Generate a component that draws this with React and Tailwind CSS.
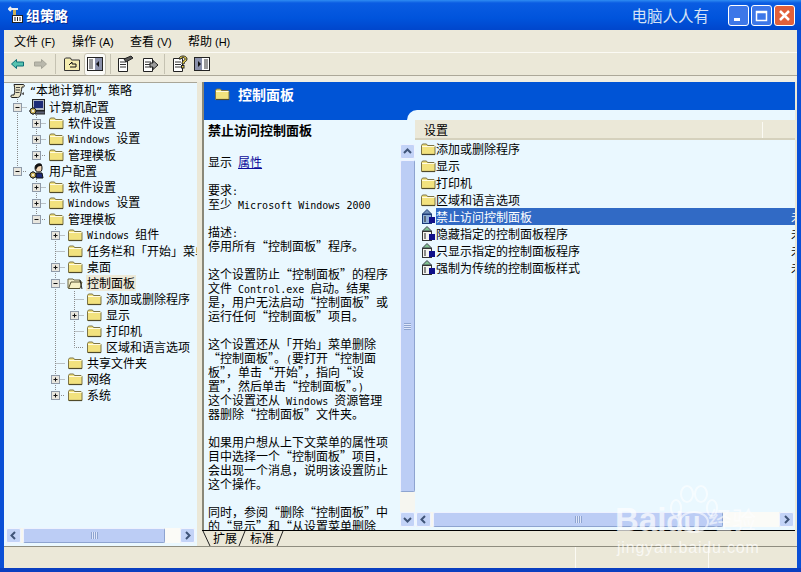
import React from 'react';

const treeRows = [
  { label: '', icon: 'root', cells: [] },
  { label: '计算机配置', icon: 'computer', cells: [['tee', 'minus']] },
  { label: '软件设置', cells: [['v'], ['tee', 'plus']] },
  { label: 'Windows 设置', cells: [['v'], ['tee', 'plus']] },
  { label: '管理模板', cells: [['v'], ['end', 'plus']] },
  { label: '用户配置', icon: 'user', cells: [['end', 'minus']] },
  { label: '软件设置', cells: [[], ['tee', 'plus']] },
  { label: 'Windows 设置', cells: [[], ['tee', 'plus']] },
  { label: '管理模板', cells: [[], ['end', 'minus']] },
  { label: 'Windows 组件', cells: [[], [], ['tee', 'plus']] },
  { label: '任务栏和「开始」菜单', cells: [[], [], ['tee']] },
  { label: '桌面', cells: [[], [], ['tee', 'plus']] },
  { label: '控制面板', icon: 'open', selected: true, cells: [[], [], ['tee', 'minus']] },
  { label: '添加或删除程序', cells: [[], [], ['v'], ['tee']] },
  { label: '显示', cells: [[], [], ['v'], ['tee', 'plus']] },
  { label: '打印机', cells: [[], [], ['v'], ['tee']] },
  { label: '区域和语言选项', cells: [[], [], ['v'], ['end']] },
  { label: '共享文件夹', cells: [[], [], ['tee']] },
  { label: '网络', cells: [[], [], ['tee', 'plus']] },
  { label: '系统', cells: [[], [], ['end', 'plus']] },
];

const descLines = [
  '显示 @属性',
  '',
  '要求:',
  '至少 Microsoft Windows 2000',
  '',
  '描述:',
  '停用所有“控制面板”程序。',
  '',
  '这个设置防止“控制面板”的程序',
  '文件 Control.exe 启动。结果',
  '是\uFF0C用户无法启动“控制面板”或',
  '运行任何“控制面板”项目。',
  '',
  '这个设置还从「开始」菜单删除',
  '“控制面板”。(要打开“控制面',
  '板”\uFF0C单击“开始”\uFF0C指向“设',
  '置”\uFF0C然后单击“控制面板”。)',
  '这个设置还从 Windows 资源管理',
  '器删除“控制面板”文件夹。',
  '',
  '如果用户想从上下文菜单的属性项',
  '目中选择一个“控制面板”项目\uFF0C',
  '会出现一个消息\uFF0C说明该设置防止',
  '这个操作。',
  '',
  '同时\uFF0C参阅“删除“控制面板”中',
  '的“显示”和“从设置菜单删除',
];

const listRows = [
  { label: '添加或删除程序', folder: true },
  { label: '显示', folder: true },
  { label: '打印机', folder: true },
  { label: '区域和语言选项', folder: true },
  { label: '禁止访问控制面板', selected: true },
  { label: '隐藏指定的控制面板程序' },
  { label: '只显示指定的控制面板程序' },
  { label: '强制为传统的控制面板样式' },
];

const mono = "font-['DejaVu_Sans_Mono'] text-[10px]";

// Latin runs use a narrow mono so they sit at 6px a character, like the bitmap font
function Txt({ children }) {
  const parts = children.split(/([\x20-\x7e]+)/);
  return (
    <span className="whitespace-pre">
      {parts.map((p, i) =>
        /^[\x20-\x7e]+$/.test(p) ? (
          <span key={i} className={mono}>{p}</span>
        ) : (
          p
        )
      )}
    </span>
  );
}

function Folder({ open }) {
  return (
    <svg width="16" height="16" viewBox="0 0 16 16" className="shrink-0">
      {open ? (
        <>
          <path d="M1 13V4h5l1 1h6v2" fill="#f3eecb" stroke="#6b6440" />
          <path d="M1.500 13.500L4 7h11l-2 6.500z" fill="#f6f0c4" stroke="#55502f" />
          <path d="M13 5l2 9" stroke="#222" />
        </>
      ) : (
        <>
          <path d="M1.500 13.500V4.500l1-1.500h4l1 1.500h6.500l1 1v8z" fill="#f2e27e" stroke="#7d7446" />
          <path d="M2 5.500h12.500" stroke="#fffbe0" />
          <path d="M2 13.500h13" stroke="#4f4a2a" strokeWidth="1.200" />
        </>
      )}
    </svg>
  );
}

function TreeCell({ kind, box }) {
  return (
    <svg width="19" height="16" viewBox="0 0 19 16" className="shrink-0">
      {kind === 'v' && <path d="M9.500 0v16" fill="none" stroke="#8b8b8b" strokeDasharray="1 1" />}
      {kind === 'tee' && <path d="M9.500 0v16M9.500 8.500H19" fill="none" stroke="#8b8b8b" strokeDasharray="1 1" />}
      {kind === 'end' && <path d="M9.500 0v8.500H19" fill="none" stroke="#8b8b8b" strokeDasharray="1 1" />}
      {box && (
        <>
          <rect x="5.500" y="4.500" width="8" height="8" fill="#e8e6de" stroke="#8f9aa8" />
          <path d="M7.500 8.500h4" stroke="#111" />
          {box === 'plus' && <path d="M9.500 6.500v4" stroke="#111" />}
        </>
      )}
    </svg>
  );
}

function RootIcon() {
  return (
    <svg width="16" height="16" viewBox="0 0 16 16" className="shrink-0">
      <path d="M4 1.500h9c1.500 0 2 2 .5 2.500H12c-.5 3-1 6-1.500 8-.3 1.500-1.500 2.500-3 2.500H2c-1.500 0-1.500-2.500 0-2.500h2c1-3 1-7 0-10.500z" fill="#e9e4c6" stroke="#222" />
      <path d="M6 4.500h4M6 7h4M5.500 9.500h4" stroke="#444" />
      <path d="M11 11l3-2v3z" fill="#555" />
    </svg>
  );
}

function Gear({ x, y }) {
  return (
    <g transform={`translate(${x} ${y})`}>
      <circle cx="4" cy="4" r="3" fill="#c9b15a" stroke="#222" />
      <circle cx="4" cy="4" r="1" fill="#fff" />
      <path d="M4 0v1M4 7v1M0 4h1M7 4h1" stroke="#222" />
    </g>
  );
}

function ComputerIcon() {
  return (
    <svg width="16" height="16" viewBox="0 0 16 16" className="shrink-0">
      <rect x="3.500" y="0.500" width="12" height="11" fill="#aeb4c4" stroke="#222" />
      <rect x="5" y="2" width="9" height="7" fill="#1c2a78" />
      <path d="M6 12h10v3H6z" fill="#5c6074" stroke="#222" />
      <Gear x="0" y="8" />
    </svg>
  );
}

function UserIcon() {
  return (
    <svg width="16" height="16" viewBox="0 0 16 16" className="shrink-0">
      <path d="M6 5c0-3 2-4 4-4s3 1 3 4-1 4-3 4-4-1-4-4z" fill="#f3d8b8" stroke="#111" />
      <path d="M6 5c0-3 2-4.500 4.500-4.500S13 2 13 3c-2 0-4 0-5 2l-1 2z" fill="#111" />
      <path d="M7 10h6l1 5H7z" fill="#1c2a78" stroke="#111" />
      <Gear x="0" y="8" />
    </svg>
  );
}

function PolicyIcon({ selected }) {
  return (
    <svg width="16" height="17" viewBox="0 0 16 17" className="shrink-0">
      <path d="M2.500 6L7 1.500 11.500 6z" fill={selected ? '#6f8fb8' : '#7fc08e'} stroke={selected ? '#24437a' : '#445'} />
      <rect x="2.500" y="6.500" width="9" height="9" fill={selected ? '#8fb0d8' : '#f4f4f0'} stroke={selected ? '#1c3a78' : '#333'} />
      <path d="M4 9h2M4 11h2M4 13h2" stroke="#222" />
      <rect x="9" y="9" width="6" height="6" fill="#10108a" />
    </svg>
  );
}

function Arrow({ dir }) {
  const d = {
    up: 'M2 7l3.500-3.500L9 7',
    down: 'M2 4l3.500 3.500L9 4',
    left: 'M7 2L3.500 5.500 7 9',
    right: 'M4 2l3.500 3.500L4 9',
  }[dir];
  return (
    <svg width="11" height="11" viewBox="0 0 11 11">
      <path d={d} fill="none" stroke="#3f5478" strokeWidth="2" />
    </svg>
  );
}

function ScrollBtn({ dir }) {
  return (
    <div className="w-[15px] h-[15px] shrink-0 flex items-center justify-center rounded-[2px] border border-[#f0f4ff] bg-[#c3d3f7]">
      <Arrow dir={dir} />
    </div>
  );
}

function HScroll({ thumbWidth }) {
  return (
    <div className="h-[15px] flex items-center bg-[#f6f6f0]">
      <ScrollBtn dir="left" />
      <div
        className="h-[15px] ml-[2px] shrink-0 flex items-center justify-center rounded-[2px] border border-[#8ea4d0] border-l-[#eef2ff] border-t-[#eef2ff] bg-[#bccdf5]"
        style={{ width: thumbWidth }}
      >
        <div className="w-[7px] h-[7px] bg-[repeating-linear-gradient(90deg,#8ea4d0_0,#8ea4d0_1px,#dfe7fb_1px,#dfe7fb_2px)]" />
      </div>
      <div className="flex-1 bg-[#fbfbf7] h-full" />
      <ScrollBtn dir="right" />
    </div>
  );
}

function ToolSep() {
  return <div className="w-px h-[20px] bg-[#c5c2b2] shrink-0" />;
}

function PageIcon({ children }) {
  return (
    <svg width="18" height="18" viewBox="0 0 18 18" className="shrink-0">
      <path d="M2.500 3.500h9v13h-9z" fill="#fff" stroke="#222" />
      <path d="M4 7h6M4 9.500h6M4 12h6" stroke="#333" />
      {children}
    </svg>
  );
}

function Toolbar() {
  return (
    <div className="h-[22px] flex items-center bg-[#ebe8d8] pl-[7px]">
      <svg width="13" height="12" viewBox="0 0 13 12" className="shrink-0">
        <path d="M.500 6l5-4.500V4h7v4h-7v2.500z" fill="#57c3b0" stroke="#0f6f78" />
      </svg>
      <svg width="13" height="12" viewBox="0 0 13 12" className="shrink-0 ml-[10px]">
        <path d="M12.500 6l-5-4.500V4h-7v4h7v2.500z" fill="#b9b8ac" stroke="#a5a498" />
      </svg>
      <div className="ml-[8px]"><ToolSep /></div>
      <svg width="18" height="18" viewBox="0 0 18 18" className="shrink-0 ml-[7px]">
        <path d="M1.500 15.500V4l1-1h5l1 2h8v10.500z" fill="#f5edb0" stroke="#333" />
        <path d="M6 10l3-3v2h4v3H7" fill="#f5edb0" stroke="#111" />
      </svg>
      <div className="ml-[3px] w-[22px] h-[23px] flex items-center justify-center rounded-[3px] border border-[#c5c2b2] bg-[#fbfbf8] shrink-0">
        <svg width="16" height="14" viewBox="0 0 16 14">
          <rect x="0.500" y="0.500" width="15" height="13" fill="#fff" stroke="#222" />
          <rect x="8" y="1" width="7" height="12" fill="#8a90aa" />
          <path d="M2 3h4M2 5h4M2 7h4M2 9h4M2 11h4" stroke="#333" />
          <path d="M12 4L9 7l3 3z" fill="#111" />
        </svg>
      </div>
      <div className="ml-[4px]"><ToolSep /></div>
      <div className="ml-[5px]">
        <PageIcon>
          <path d="M8 4l7-3 2 2-7 4z" fill="#555" stroke="#222" />
        </PageIcon>
      </div>
      <div className="ml-[7px]">
        <PageIcon>
          <path d="M9 8h3V5.500l5 4.500-5 4.500V12H9z" fill="#9a9a9a" stroke="#222" />
        </PageIcon>
      </div>
      <div className="ml-[5px]"><ToolSep /></div>
      <div className="ml-[6px]">
        <PageIcon>
          <path d="M8 4c0-4 8-4 8 0 0 3-3 2-3 5h-2c0-4 3-3 3-5 0-2-4-2-4 0z" fill="#f2d84a" stroke="#222" />
          <rect x="10.500" y="10.500" width="2.500" height="2.500" fill="#f2d84a" stroke="#222" />
        </PageIcon>
      </div>
      <svg width="16" height="14" viewBox="0 0 16 14" className="shrink-0 ml-[5px]">
        <rect x="0.500" y="0.500" width="15" height="13" fill="#fff" stroke="#222" />
        <rect x="1" y="1" width="7" height="12" fill="#8a90aa" />
        <path d="M10 3h4M10 5h4M10 7h4M10 9h4M10 11h4" stroke="#333" />
        <path d="M4 4l3 3-3 3z" fill="#111" />
      </svg>
    </div>
  );
}

function TitleButton({ kind }) {
  const bg = kind === 'close' ? 'bg-[#e2603a]' : 'bg-[#3d77e8]';
  return (
    <div className={`w-[21px] h-[21px] flex items-center justify-center rounded-[3px] border border-white ${bg}`}>
      <svg width="15" height="15" viewBox="0 0 15 15">
        {kind === 'min' && <rect x="3" y="10" width="6" height="3" fill="#fff" />}
        {kind === 'max' && <path d="M2.500 3.500h10v9h-10zM2.500 4.500h10" fill="none" stroke="#fff" strokeWidth="1.500" />}
        {kind === 'close' && <path d="M3 3l9 9M12 3l-9 9" stroke="#fff" strokeWidth="2.500" />}
      </svg>
    </div>
  );
}

function Watermark() {
  return (
    <div className="absolute left-[612px] top-[484px] w-[160px] h-[72px] text-white pointer-events-none font-['Liberation_Sans',sans-serif]">
      <svg width="60" height="50" viewBox="0 0 60 50" className="absolute left-[50px] top-0 opacity-60">
        <ellipse cx="14" cy="24" rx="5" ry="8" fill="none" stroke="#fff" strokeWidth="2" />
        <ellipse cx="25" cy="10" rx="6" ry="8" fill="none" stroke="#fff" strokeWidth="2" />
        <ellipse cx="39" cy="10" rx="6" ry="8" fill="none" stroke="#fff" strokeWidth="2" />
        <ellipse cx="50" cy="24" rx="5" ry="8" fill="none" stroke="#fff" strokeWidth="2" />
        <ellipse cx="32" cy="38" rx="14" ry="10" fill="none" stroke="#fff" strokeWidth="2" />
      </svg>
      <div className="absolute left-[3px] top-[16px] text-[33px] leading-[40px] font-bold opacity-70 whitespace-nowrap">
        Bai<span className="text-[28px]">du</span>
      </div>
      <div className="absolute left-[96px] top-[20px] text-[24px] leading-[30px] opacity-60 whitespace-nowrap font-['Noto_Sans_CJK_SC',sans-serif]">
        经验
      </div>
      <div className="absolute left-[5px] top-[54px] text-[16px] leading-[20px] tracking-[0.8px] opacity-70 whitespace-nowrap">
        jingyan.baidu.com
      </div>
    </div>
  );
}

export default function App() {
  return (
    <div
      lang="zh-CN"
      className="relative w-[801px] h-[572px] overflow-hidden flex flex-col bg-[#0a4fd6] text-black text-[12px] font-['Noto_Sans_CJK_SC',sans-serif]"
    >
      {/* Title bar */}
      <div className="h-[30px] shrink-0 flex items-center pl-[8px] pr-[6px] bg-[linear-gradient(180deg,#2f8cf2_0,#0a5ce2_10%,#0054dc_60%,#0046cc_100%)]">
        <svg width="16" height="18" viewBox="0 0 16 18" className="shrink-0">
          <path d="M1 3h9M3 1l-2 2 2 2" stroke="#eee" strokeWidth="2" fill="none" />
          <rect x="5" y="4" width="3" height="5" fill="#c9b15a" />
          <rect x="4.500" y="9.500" width="10" height="7" fill="#fff" stroke="#222" />
          <path d="M7 11v4M9.500 11v4M12 11v4" stroke="#222" />
        </svg>
        <span className="ml-[2px] text-[14px] font-bold text-white leading-[18px] [text-shadow:1px_1px_#0a2a90]">组策略</span>
        <span className="ml-auto text-[15.500px] leading-[20px] text-[#d4e2f5] whitespace-nowrap">电脑人人有</span>
        <div className="ml-[19px] flex gap-[2px]">
          <TitleButton kind="min" />
          <TitleButton kind="max" />
          <TitleButton kind="close" />
        </div>
      </div>

      <div className="flex-1 flex flex-col mx-[4px] bg-[#ebe8d8] overflow-hidden">
        {/* Menu */}
        <div className="h-[22px] shrink-0 flex items-center pl-[10px] bg-[#ece9da] border-b border-[#fbfaf4] box-content">
          {[['文件', '(F)'], ['操作', '(A)'], ['查看', '(V)'], ['帮助', '(H)']].map(([name, key]) => (
            <div key={name} className="w-[58px] leading-[16px] whitespace-nowrap">
              {name}
              <span className="ml-[3px] font-['Liberation_Sans'] text-[11px]">{key}</span>
            </div>
          ))}
        </div>
        <Toolbar />
        <div className="h-[7px] shrink-0 border-t border-[#aca899] bg-[#f0eee2]" />

        <div className="flex-1 flex min-h-0">
          {/* Tree pane */}
          <div className="w-[193px] shrink-0 flex flex-col bg-[#eaf8ff] border-t border-[#a9a698]">
            <div className="flex-1 min-h-0 overflow-hidden pl-[4px]">
              {treeRows.map((row, i) => (
                <div key={i} className="h-4 flex items-center whitespace-nowrap">
                  {row.cells.map((c, j) => (
                    <TreeCell key={j} kind={c[0]} box={c[1]} />
                  ))}
                  <div className="ml-[2px] flex items-center">
                    {row.icon === 'root' && <RootIcon />}
                    {row.icon === 'computer' && <ComputerIcon />}
                    {row.icon === 'user' && <UserIcon />}
                    {row.icon === 'open' && <Folder open />}
                    {!row.icon && <Folder />}
                  </div>
                  <div className={`ml-[3px] px-[1px] leading-4 ${row.selected ? 'bg-[#ece9d8]' : ''}`}>
                    {row.icon === 'root' ? (
                      <span className="whitespace-pre">
                        <span className={mono}>“</span>本地计算机<span className={mono}>” </span>策略
                      </span>
                    ) : (
                      <Txt>{row.label}</Txt>
                    )}
                  </div>
                </div>
              ))}
            </div>
            <div className="px-[2px] pb-[3px]">
              <HScroll thumbWidth={142} />
            </div>
          </div>

          <div className="w-[5px] shrink-0 bg-[#ebe8d8]" />

          {/* Right pane */}
          <div className="flex-1 min-w-0 flex flex-col pr-[2px]">
            <div className="flex-1 min-h-0 flex flex-col bg-[#0054d6] border-l-2 border-[#8a8878]">
              <div className="h-[28px] shrink-0 flex items-center pl-[10px] pb-[4px]">
                <Folder />
                <span className="ml-[8px] text-[14px] font-bold text-white leading-[18px]">控制面板</span>
              </div>
              <div className="h-[10px] shrink-0 flex">
                <div className="w-[203px] shrink-0" />
                <div className="flex-1 bg-[#eaf8ff] rounded-tl-[12px]" />
              </div>
              <div className="flex-1 min-h-0 flex bg-[#eaf8ff]">
                {/* Description text */}
                <div className="w-[196px] shrink-0 overflow-hidden pl-[4px] pt-[3px]">
                  <div className="h-[14px] text-[13px] font-bold leading-[14px] mb-[18px] whitespace-nowrap">禁止访问控制面板</div>
                  {descLines.map((line, i) => (
                    <div key={i} className="h-[14px] leading-[14px] whitespace-nowrap">
                      {line.includes('@') ? (
                        <>
                          <Txt>{'显示 '}</Txt>
                          <span className="text-[#0a0a9a] underline">属性</span>
                        </>
                      ) : (
                        <Txt>{line}</Txt>
                      )}
                    </div>
                  ))}
                </div>
                {/* Description scrollbar */}
                <div className="w-[15px] shrink-0 flex flex-col pt-[24px] pb-[3px]">
                  <ScrollBtn dir="up" />
                  <div className="h-[332px] shrink-0 mt-[1px] flex items-center justify-center rounded-[2px] border border-[#8ea4d0] border-l-[#eef2ff] border-t-[#eef2ff] bg-[#bccdf5]">
                    <div className="w-[7px] h-[7px] bg-[repeating-linear-gradient(180deg,#8ea4d0_0,#8ea4d0_1px,#dfe7fb_1px,#dfe7fb_2px)]" />
                  </div>
                  <div className="flex-1 bg-[#f6f6f0]" />
                  <ScrollBtn dir="down" />
                </div>
                {/* Settings list */}
                <div className="flex-1 min-w-0 flex flex-col pb-[3px]">
                  <div className="h-[20px] shrink-0 flex items-center pt-[1px] bg-[#ebe8d8] border-b-2 border-[#d5d1bd]">
                    <div className="w-[348px] pl-[9px] leading-[16px] border-r border-[#fbfaf4]">设置</div>
                  </div>
                  <div className="flex-1 min-h-0 overflow-hidden pl-[5px]">
                    {listRows.map((row) => (
                      <div key={row.label} className="h-[17px] flex items-center whitespace-nowrap">
                        {row.folder ? <Folder /> : <PolicyIcon selected={row.selected} />}
                        <div className={`flex-1 h-[17px] flex items-center justify-between leading-[17px] overflow-hidden ${row.selected ? 'bg-[#316ac5] text-white' : ''}`}>
                          <span>{row.label}</span>
                          {!row.folder && <span className="w-[4px] overflow-hidden">未</span>}
                        </div>
                      </div>
                    ))}
                  </div>
                  <div className="pl-[1px] pr-[1px]">
                    <HScroll thumbWidth={290} />
                  </div>
                </div>
              </div>
            </div>
            {/* Tab strip */}
            <div className="relative h-[16px] shrink-0 border-t border-black flex items-start pl-[11px] leading-[14px]">
              <svg width="90" height="16" viewBox="0 0 90 16" className="absolute left-0 top-0">
                <path d="M1 0l7 15" fill="none" stroke="#222" />
                <path d="M37 15l6-15M75 15l6-15" fill="none" stroke="#222" />
              </svg>
              <span className="relative">扩展</span>
              <span className="relative ml-[13px]">标准</span>
            </div>
          </div>
        </div>

        {/* Status bar */}
        <div className="h-[22px] shrink-0 flex border-t border-[#8f8d7f] bg-[#ebe8d8]">
          <div className="w-[572px] border-r border-[#fbfaf4]" />
          <div className="w-[133px] border-r border-[#fbfaf4]" />
        </div>
      </div>
      <div className="h-[4px] shrink-0 bg-[#0a3fc0]" />
      <Watermark />
    </div>
  );
}
